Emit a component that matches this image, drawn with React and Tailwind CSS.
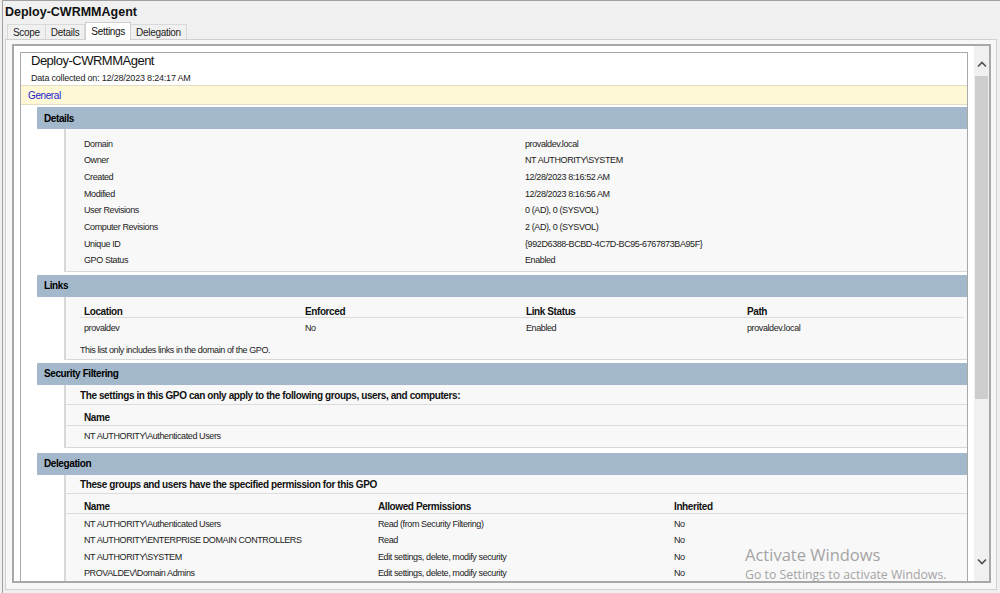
import React from 'react'

const details = [
  ['Domain', 'provaldev.local'],
  ['Owner', 'NT AUTHORITY\\SYSTEM'],
  ['Created', '12/28/2023 8:16:52 AM'],
  ['Modified', '12/28/2023 8:16:56 AM'],
  ['User Revisions', '0 (AD), 0 (SYSVOL)'],
  ['Computer Revisions', '2 (AD), 0 (SYSVOL)'],
  ['Unique ID', '{992D6388-BCBD-4C7D-BC95-6767873BA95F}'],
  ['GPO Status', 'Enabled'],
]

const delegation = [
  ['NT AUTHORITY\\Authenticated Users', 'Read (from Security Filtering)', 'No'],
  ['NT AUTHORITY\\ENTERPRISE DOMAIN CONTROLLERS', 'Read', 'No'],
  ['NT AUTHORITY\\SYSTEM', 'Edit settings, delete, modify security', 'No'],
  ['PROVALDEV\\Domain Admins', 'Edit settings, delete, modify security', 'No'],
]

const SectionHeader = ({ children }) => (
  <div className="h-[22px] ml-[16px] bg-[#a3b8cb] pl-[7px] flex items-center text-[10px] font-bold tracking-[-0.4px] text-black">
    {children}
  </div>
)

const SectionBody = ({ children, className = '' }) => (
  <div className={`ml-[43px] border-l-2 border-b border-[#d8d8d8] bg-[#f8f8f8] ${className}`}>
    {children}
  </div>
)

const Tab = ({ label, active }) => (
  <div
    className={
      active
        ? 'h-[18px] px-[5px] flex items-center bg-white border border-b-0 border-[#d0d0d0] relative z-10 -mb-px text-[10px] tracking-[-0.3px] text-[#111]'
        : 'h-[15px] px-[5px] flex items-center bg-[#f0f0f0] border border-b-0 border-[#d9d9d9] -ml-px first:ml-0 text-[10px] tracking-[-0.3px] text-[#222]'
    }
  >
    {label}
  </div>
)

const Chevron = ({ down }) => (
  <svg width="10" height="7" viewBox="0 0 10 7">
    <polyline
      points={down ? '1,1.5 5,5.5 9,1.5' : '1,5.5 5,1.5 9,5.5'}
      fill="none"
      stroke="#505050"
      strokeWidth="1.6"
    />
  </svg>
)

const App = () => {
  return (
    <div className="relative w-[1000px] h-[593px] bg-[#f0f0f0] pl-[2px] overflow-hidden font-['Liberation_Sans',Arial,sans-serif]">
      <div className="h-full border-l border-t border-[#a0a0a0] flex flex-col">
        {/* window title */}
        <div className="h-[21px] pl-[2px] pt-[1px] flex items-center text-[12.5px] font-bold text-[#111]">
          Deploy-CWRMMAgent
        </div>

        {/* tabs */}
        <div className="h-[17px] pl-[4px] flex items-end">
          <Tab label="Scope" />
          <Tab label="Details" />
          <Tab label="Settings" active />
          <Tab label="Delegation" />
        </div>

        {/* tab panel */}
        <div className="flex-1 min-h-0 ml-[2px] mr-[3px] mb-[3px] border border-[#d0d0d0] bg-[#f7f7f7] pt-[4px] pl-[6px] pr-[5px] pb-[6px] flex">
          <div className="flex-1 min-w-0 border-2 border-[#a8a8a8] bg-white flex">
            {/* report area */}
            <div className="flex-1 min-w-0 overflow-hidden pt-[6px] pl-[6px] pr-[6px]">
              <div className="border border-[#a8a8a8] bg-white text-[9px] tracking-[-0.4px] text-[#222]">
                <div className="h-[32px] pl-[10px]">
                  <div className="leading-[16px] text-[13px] tracking-[-0.5px] text-[#111]">Deploy-CWRMMAgent</div>
                  <div className="mt-[3px] leading-[12px] text-[9px] tracking-[-0.2px] text-[#222]">
                    Data collected on: 12/28/2023 8:24:17 AM
                  </div>
                </div>

                <div className="h-[20px] border-y border-[#e2ddc2] bg-[#fef8d6] pl-[7px] flex items-center text-[10px] tracking-[-0.4px] text-[#1c1cd0]">
                  General
                </div>

                {/* Details */}
                <div className="mt-[2px]">
                  <SectionHeader>Details</SectionHeader>
                  <SectionBody className="pt-[7px] pb-[1px] mb-[3px]">
                    {details.map(([k, v]) => (
                      <div key={k} className="grid grid-cols-[441px_1fr] pl-[18px] h-[16.7px] items-center">
                        <span>{k}</span>
                        <span>{v}</span>
                      </div>
                    ))}
                  </SectionBody>
                </div>

                {/* Links */}
                <SectionHeader>Links</SectionHeader>
                <SectionBody className="pt-[7px] pb-[1px] mb-[3px]">
                  <div className="ml-[14px] mr-[4px]">
                    <div className="grid grid-cols-[221px_221px_221px_1fr] h-[14px] items-center border-b border-[#dcdcdc] text-[10px] font-bold text-[#111]">
                      <span className="pl-[4px]">Location</span>
                      <span className="pl-[4px]">Enforced</span>
                      <span className="pl-[4px]">Link Status</span>
                      <span className="pl-[4px]">Path</span>
                    </div>
                    <div className="grid grid-cols-[221px_221px_221px_1fr] h-[19px] pt-[3px] items-center">
                      <span className="pl-[4px]">provaldev</span>
                      <span className="pl-[4px]">No</span>
                      <span className="pl-[4px]">Enabled</span>
                      <span className="pl-[4px]">provaldev.local</span>
                    </div>
                  </div>
                  <div className="mt-[6px] h-[15px] pt-[2px] flex items-center pl-[14px]">
                    This list only includes links in the domain of the GPO.
                  </div>
                </SectionBody>

                {/* Security Filtering */}
                <SectionHeader>Security Filtering</SectionHeader>
                <SectionBody className="pb-[1px] mb-[5px]">
                  <div className="pt-[2px] h-[20px] flex items-center pl-[14px] border-b border-[#dcdcdc] text-[10px] font-bold text-[#111]">
                    The settings in this GPO can only apply to the following groups, users, and computers:
                  </div>
                  <div className="mt-[6px] h-[15px] flex items-center pl-[18px] border-b border-[#dcdcdc] text-[10px] font-bold text-[#111]">
                    Name
                  </div>
                  <div className="mt-[2px] h-[18px] flex items-center pl-[18px]">
                    NT AUTHORITY\Authenticated Users
                  </div>
                </SectionBody>

                {/* Delegation */}
                <SectionHeader>Delegation</SectionHeader>
                <SectionBody>
                  <div className="pt-[1px] h-[19px] flex items-center pl-[14px] border-b border-[#dcdcdc] text-[10px] font-bold text-[#111]">
                    These groups and users have the specified permission for this GPO
                  </div>
                  <div className="mt-[5px] grid grid-cols-[294px_296px_1fr] pl-[14px] h-[15px] items-center border-b border-[#dcdcdc] text-[10px] font-bold text-[#111]">
                    <span className="pl-[4px]">Name</span>
                    <span className="pl-[4px]">Allowed Permissions</span>
                    <span className="pl-[4px]">Inherited</span>
                  </div>
                  <div className="pt-[3px] pb-[10px]">
                    {delegation.map(([n, p, i]) => (
                      <div key={n} className="grid grid-cols-[294px_296px_1fr] pl-[14px] h-[16.4px] items-center">
                        <span className="pl-[4px]">{n}</span>
                        <span className="pl-[4px]">{p}</span>
                        <span className="pl-[4px]">{i}</span>
                      </div>
                    ))}
                  </div>
                </SectionBody>
              </div>
            </div>

            {/* scrollbar */}
            <div className="w-[15px] bg-[#f0f0f0] flex flex-col">
              <div className="h-[30px] flex justify-center pt-[15px]">
                <Chevron />
              </div>
              <div className="h-[323px] mx-[1px] bg-[#cdcdcd]" />
              <div className="flex-1" />
              <div className="h-[40px] flex items-center justify-center">
                <Chevron down />
              </div>
            </div>
          </div>
        </div>
      </div>

      {/* activation watermark */}
      <div className="absolute left-[745px] top-[544px] font-['Open_Sans',sans-serif] text-[#a4a4a4] pointer-events-none">
        <div className="text-[16.5px] leading-[22px]">Activate Windows</div>
        <div className="text-[12.3px] leading-[17px]">Go to Settings to activate Windows.</div>
      </div>
    </div>
  )
}

export default App
